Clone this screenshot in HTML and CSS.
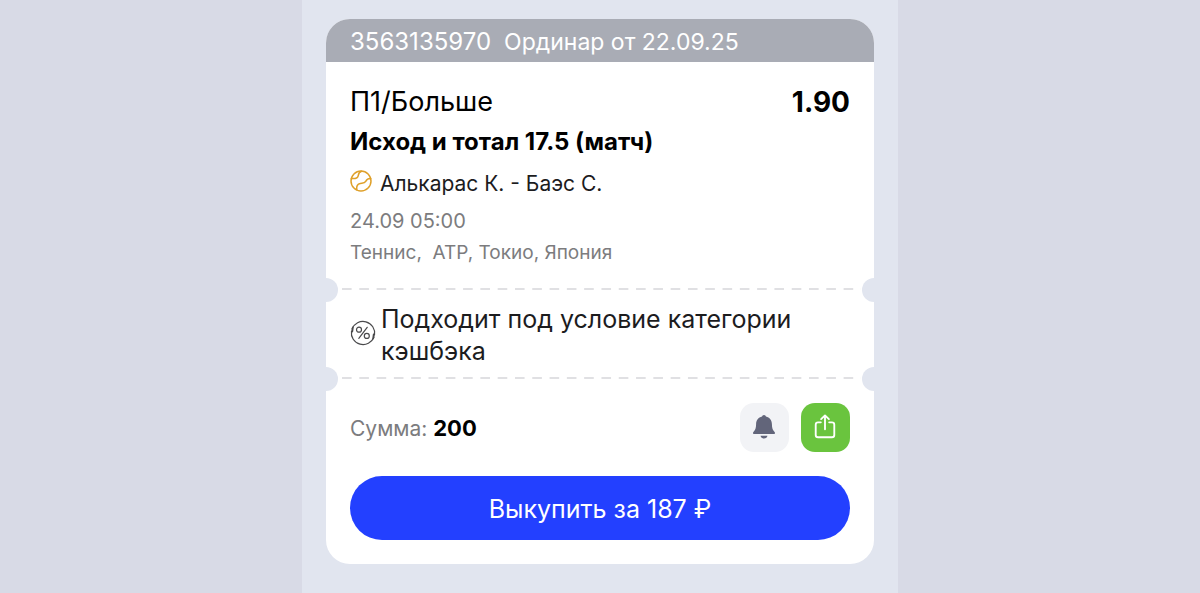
FILE: index.html
```html
<!DOCTYPE html>
<html lang="ru">
<head>
<meta charset="utf-8">
<meta name="viewport" content="width=device-width, initial-scale=1">
<title>Ординар</title>
<link rel="stylesheet" href="styles.css">
</head>
<body>
<main class="screen">
  <article class="coupon">
    <header class="coupon-header"><span class="number">3563135970</span><span>Ординар от 22.09.25</span></header>

    <section class="bet">
      <div class="bet-top">
        <h1 class="pick">П1/Больше</h1>
        <span class="odds">1.90</span>
      </div>
      <h2 class="market">Исход и тотал 17.5 (матч)</h2>
      <p class="match">
        <svg class="ball" viewBox="0 0 22 22" fill="none" stroke="currentColor" stroke-width="1.5" stroke-linecap="round" aria-hidden="true">
          <circle cx="11" cy="11" r="10"/>
          <path d="M1.400 8.500C5.500 8.900 8 7.500 8.300 5.300S9 2.200 11.500 1.200"/>
          <path d="M6.800 19.800C6.200 15.500 7.700 13.800 10.300 13.400S14.600 13.300 15.700 11.300 18.200 8.300 20.700 8.500"/>
        </svg>
        <span>Алькарас К. - Баэс С.</span>
      </p>
      <p class="time">24.09 05:00</p>
      <p class="league">Теннис,&nbsp; ATP, Токио, Япония</p>
    </section>

    <hr class="tear">

    <section class="cashback">
      <svg class="percent" viewBox="0 0 26 26" fill="none" stroke="currentColor" stroke-width="1.2" stroke-linecap="round" aria-hidden="true">
        <path d="M2 9A11.700 11.700 0 0 1 24.500 15M24 17A11.700 11.700 0 0 1 1.500 11"/>
        <path d="M2.800 7.500L2.300 11.500M23.200 18.500L23.700 14.500" stroke-width="1.800"/>
        <circle cx="9" cy="9.700" r="2.500"/>
        <circle cx="16.800" cy="15.900" r="2.500"/>
        <path d="M17.200 7.300L8.800 18.300"/>
      </svg>
      <p class="cashback-text">Подходит под условие категории кэшбэка</p>
    </section>

    <hr class="tear">

    <section class="summary">
      <div class="summary-row">
        <p class="amount">Сумма: <strong>200</strong></p>
        <div class="actions">
          <button class="icon-button" type="button" aria-label="Уведомления">
            <svg class="icon" viewBox="0 0 28 28" fill="currentColor" aria-hidden="true">
              <path d="M14 1c1.200 0 1.900.8 2.100 1.800 4 1 6.400 4.200 6.400 8 0 4.500 1 6.700 2.900 8.600.8.800.5 2.100-.8 2.100H3.400c-1.300 0-1.600-1.300-.8-2.100 1.900-1.900 2.900-4.100 2.900-8.600 0-3.800 2.400-7 6.400-8C12.100 1.800 12.800 1 14 1z"/>
              <path d="M10.300 23.500h7.400c-.3 1.900-1.700 3-3.700 3s-3.400-1.100-3.700-3z"/>
            </svg>
          </button>
          <button class="icon-button share" type="button" aria-label="Поделиться">
            <svg class="icon" viewBox="0 0 28 28" fill="none" stroke="currentColor" stroke-width="2" stroke-linecap="round" stroke-linejoin="round" aria-hidden="true">
              <path d="M9.500 9H6.500a2.500 2.500 0 0 0-2.500 2.500v11a2.500 2.500 0 0 0 2.500 2.500h15a2.500 2.500 0 0 0 2.500-2.500V11.500a2.500 2.500 0 0 0-2.500-2.500h-3"/>
              <path d="M14 16.500V1.500M9.800 5.500L14 1.500 18.200 5.500"/>
            </svg>
          </button>
        </div>
      </div>
      <button class="cashout" type="button">Выкупить за 187 ₽</button>
    </section>
  </article>
</main>
</body>
</html>
```

FILE: styles.css
```css
* {
  box-sizing: border-box;
}

body {
  margin: 0;
  background: #d8dae6;
  color: #000;
  font-family: Inter, "Noto Sans", sans-serif;
}

h1, h2, p {
  margin: 0;
}

button {
  border: 0;
  padding: 0;
  font: inherit;
  cursor: pointer;
}

.screen {
  max-width: 596px;
  min-height: 100vh;
  margin: 0 auto;
  padding: 19px 24px 24px;
  background: #e1e5ef;
}

.coupon {
  overflow: hidden;
  border-radius: 24px;
  background: #fff;
}

.coupon-header {
  display: flex;
  align-items: baseline;
  gap: 13px;
  padding: 3px 24px 0;
  background: #a9acb5;
  color: #fff;
  font-size: 23px;
  line-height: 40px;
}

.number {
  font-size: 24px;
}

.bet {
  padding: 20px 24px;
}

.bet-top {
  display: flex;
  justify-content: space-between;
  line-height: 40px;
}

.pick {
  font-size: 27px;
  font-weight: 400;
}

.odds {
  font-size: 28px;
  font-weight: 700;
}

.market {
  font-size: 24px;
  font-weight: 700;
  line-height: 40px;
}

.match {
  display: flex;
  gap: 8px;
  color: #1c1c1e;
  font-size: 21px;
  line-height: 44px;
}

.ball {
  width: 22px;
  height: 22px;
  margin-top: 8px;
  color: #dfa02a;
}

.time,
.league {
  color: #7c7c7e;
  line-height: 31px;
}

.time {
  font-size: 20px;
}

.league {
  font-size: 19px;
}

.tear {
  position: relative;
  overflow: visible;
  height: 2px;
  margin: 0;
  border: 0;
  padding: 0 13px 0 16px;
  background: linear-gradient(90deg, #e0e0e3 10px, transparent 10px) 0 0 / calc(100% / 30) 2px repeat-x content-box;
}

.tear::before,
.tear::after {
  content: "";
  position: absolute;
  top: -10px;
  width: 24px;
  height: 24px;
  border-radius: 50%;
  background: #e1e5ef;
}

.tear::before {
  left: -12px;
}

.tear::after {
  right: -12px;
}

.cashback {
  display: flex;
  align-items: center;
  gap: 5px;
  padding: 13px 24px 10px;
}

.percent {
  flex: none;
  width: 26px;
  height: 26px;
  margin-bottom: 4px;
  color: #4a4a4c;
}

.cashback-text {
  color: #1c1c1e;
  font-size: 25px;
  line-height: 32px;
}

.summary {
  padding: 24px;
}

.summary-row {
  display: flex;
  align-items: center;
  justify-content: space-between;
  margin-bottom: 24px;
}

.amount {
  color: #7c7c7e;
  font-size: 21px;
}

.amount strong {
  color: #000;
  font-size: 22px;
  font-weight: 700;
}

.actions {
  display: flex;
  gap: 12px;
}

.icon-button {
  display: grid;
  place-items: center;
  width: 49px;
  height: 49px;
  border-radius: 14px;
  padding: 0 1px 2px 0;
  background: #f2f3f6;
  color: #62657a;
}

.share {
  background: #6ac43e;
  color: #fff;
}

.icon {
  width: 26px;
  height: 26px;
}

.cashout {
  display: block;
  width: 100%;
  border-radius: 32px;
  padding: 3px 0 0;
  background: #2340ff;
  color: #fff;
  font-size: 25px;
  line-height: 61px;
}
```
